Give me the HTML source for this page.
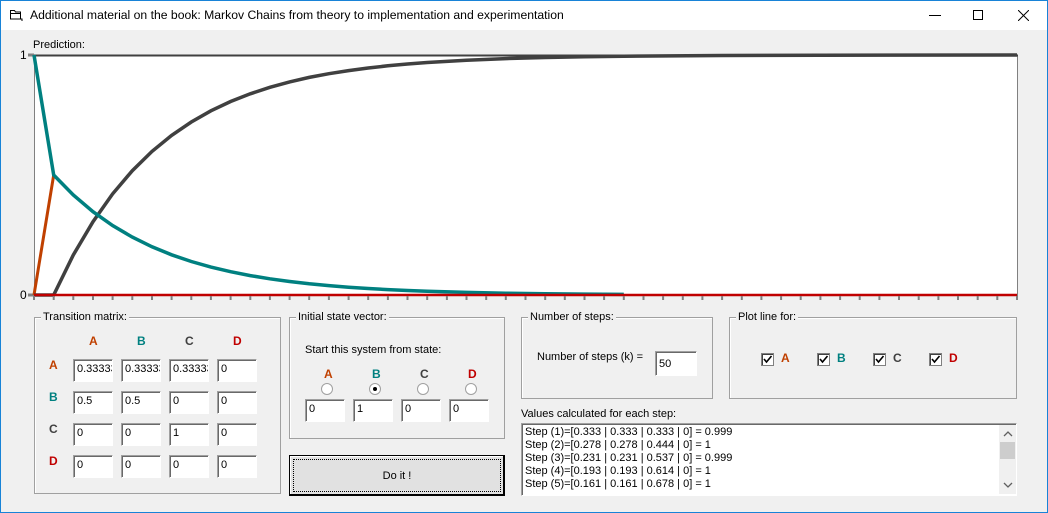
<!DOCTYPE html>
<html><head><style>
*{margin:0;padding:0;box-sizing:border-box}
body{width:1048px;height:513px;background:#f0f0f0;font-family:"Liberation Sans",sans-serif;font-size:11px;color:#000;position:relative;overflow:hidden}
.a{position:absolute}
.title{left:0;top:0;width:1048px;height:30px;background:#fff}
.gb{position:absolute;border:1px solid #a0a0a0;box-shadow:inset 1px 1px 0 #fff}
.gl{position:absolute;top:-7px;left:6px;background:#f0f0f0;padding:0 2px;white-space:nowrap}
.tb{position:absolute;width:40px;height:23px;background:#fff;border:1px solid;border-color:#a0a0a0 #fff #fff #a0a0a0;box-shadow:inset 1px 1px 0 #696969;padding:3px 0 0 3px;white-space:nowrap;overflow:hidden}
.h{position:absolute;font-weight:bold;font-size:12px}
.o{color:#c04000}.t{color:#008080}.g{color:#404040}.r{color:#c00000}
.rad{position:absolute;width:12px;height:12px;border-radius:50%;border:1px solid #a0a0a0;background:#fff}
.cb{position:absolute;width:13px;height:13px;border:1px solid #808080;background:#fff;box-shadow:inset 1px 1px 0 #404040}
</style></head><body>
<div class="a title"></div>
<div class="a" style="left:0;top:0;width:1048px;height:513px;border:1px solid #1883d7;z-index:5;pointer-events:none"></div>
<svg class="a" style="left:9px;top:9px" width="14" height="12" viewBox="0 0 14 12"><path d="M1.5 1.5h4l1 1.5h5v7h-10z M1.5 4.5h10" fill="none" stroke="#000"/><path d="M11 10h2v2" stroke="#000" fill="none"/></svg>
<div class="a" style="left:30px;top:8px;font-size:12.2px">Additional material on the book: Markov Chains from theory to implementation and experimentation</div>
<div class="a" style="left:929px;top:15px;width:12px;height:1px;background:#000"></div>
<div class="a" style="left:973px;top:10px;width:10px;height:10px;border:1px solid #000"></div>
<svg class="a" style="left:1018px;top:10px" width="11" height="11"><path d="M0 0L11 11M11 0L0 11" stroke="#000"/></svg>

<div class="a" style="left:33px;top:39px">Prediction:</div>
<div class="a" style="left:20px;top:48px;font-size:12px">1</div>
<div class="a" style="left:20px;top:288px;font-size:12px">0</div>
<svg class="a" style="left:0;top:0" width="1048" height="310">
<rect x="34.5" y="55.5" width="983" height="240" fill="#fff" stroke="#808080"/>
<line x1="34" y1="55.5" x2="1018" y2="55.5" stroke="#404040" stroke-width="2"/>
<line x1="28" y1="55" x2="34" y2="55" stroke="#808080" stroke-width="3"/>
<line x1="28" y1="295" x2="34" y2="295" stroke="#808080" stroke-width="3"/>
<path d="M34 295L53.7 175" stroke="#c04000" stroke-width="3" fill="none"/>
<path d="M34 295L53.7 295L73.3 255L93 221.7L112.6 193.9L132.3 170.7L152 151.4L171.6 135.4L191.3 122L210.9 110.8L230.6 101.5L250.3 93.8L269.9 87.3L289.6 81.9L309.2 77.4L328.9 73.7L348.6 70.6L368.2 68L387.9 65.8L407.5 64L427.2 62.5L466.5 60.2L505.8 58.6L545.2 57.5L584.5 56.7L623.8 56.2L722 55.5L820 55.2L1017 55" stroke="#404040" stroke-width="3.5" fill="none"/>
<path d="M34 55L53.7 175L73.3 195L93 211.7L112.6 225.5L132.3 237.1L152 246.8L171.6 254.8L191.3 261.5L210.9 267.1L230.6 271.7L250.3 275.6L269.9 278.8L289.6 281.5L309.2 283.8L328.9 285.6L348.6 287.2L368.2 288.5L387.9 289.6L407.5 290.5L427.2 291.2L466.5 292.4L505.8 293.2L545.2 293.8L584.5 294.1L623.8 294.4" stroke="#008080" stroke-width="3.5" fill="none"/>
<path d="M34 295H1017" stroke="#c00000" stroke-width="2.5" fill="none"/>
<path d="M34 296v4M53.7 296v4M73.3 296v4M93 296v4M112.6 296v4M132.3 296v4M152 296v4M171.6 296v4M191.3 296v4M210.9 296v4M230.6 296v4M250.3 296v4M269.9 296v4M289.6 296v4M309.2 296v4M328.9 296v4M348.6 296v4M368.2 296v4M387.9 296v4M407.5 296v4M427.2 296v4M446.9 296v4M466.5 296v4M486.2 296v4M505.8 296v4M525.5 296v4M545.2 296v4M564.8 296v4M584.5 296v4M604.1 296v4M623.8 296v4M643.5 296v4M663.1 296v4M682.8 296v4M702.4 296v4M722.1 296v4M741.8 296v4M761.4 296v4M781.1 296v4M800.7 296v4M820.4 296v4M840.1 296v4M859.7 296v4M879.4 296v4M899 296v4M918.7 296v4M938.4 296v4M958 296v4M977.7 296v4M997.3 296v4M1017 296v4" stroke="#808080" stroke-width="2"/>
</svg>

<div class="gb" style="left:34px;top:317px;width:247px;height:177px"><div class="gl">Transition matrix:</div></div>
<div class="h o" style="left:89px;top:334px">A</div><div class="h t" style="left:137px;top:334px">B</div><div class="h g" style="left:185px;top:334px">C</div><div class="h r" style="left:233px;top:334px">D</div>
<div class="h o" style="left:49px;top:358px">A</div><div class="h t" style="left:49px;top:390px">B</div><div class="h g" style="left:49px;top:422px">C</div><div class="h r" style="left:49px;top:454px">D</div>
<div class="tb" style="left:73px;top:359px">0.33333</div><div class="tb" style="left:121px;top:359px">0.33333</div><div class="tb" style="left:169px;top:359px">0.33333</div><div class="tb" style="left:217px;top:359px">0</div>
<div class="tb" style="left:73px;top:391px">0.5</div><div class="tb" style="left:121px;top:391px">0.5</div><div class="tb" style="left:169px;top:391px">0</div><div class="tb" style="left:217px;top:391px">0</div>
<div class="tb" style="left:73px;top:423px">0</div><div class="tb" style="left:121px;top:423px">0</div><div class="tb" style="left:169px;top:423px">1</div><div class="tb" style="left:217px;top:423px">0</div>
<div class="tb" style="left:73px;top:455px">0</div><div class="tb" style="left:121px;top:455px">0</div><div class="tb" style="left:169px;top:455px">0</div><div class="tb" style="left:217px;top:455px">0</div>

<div class="gb" style="left:289px;top:317px;width:216px;height:122px"><div class="gl">Initial state vector:</div></div>
<div class="a" style="left:305px;top:344px">Start this system from state:</div>
<div class="h o" style="left:324px;top:367px">A</div><div class="h t" style="left:372px;top:367px">B</div><div class="h g" style="left:420px;top:367px">C</div><div class="h r" style="left:468px;top:367px">D</div>
<div class="rad" style="left:321px;top:383px"></div><div class="rad" style="left:369px;top:383px"><div style="position:absolute;left:3px;top:3px;width:4px;height:4px;border-radius:50%;background:#000"></div></div><div class="rad" style="left:417px;top:383px"></div><div class="rad" style="left:465px;top:383px"></div>
<div class="tb" style="left:305px;top:399px">0</div><div class="tb" style="left:353px;top:399px">1</div><div class="tb" style="left:401px;top:399px">0</div><div class="tb" style="left:449px;top:399px">0</div>

<div class="a" style="left:289px;top:455px;width:216px;height:41px;border:1px solid #000;border-width:1px 2px 2px 1px;background:#e1e1e1;box-shadow:inset 1px 1px 0 #fff"><div style="position:absolute;left:3px;top:3px;right:2px;bottom:2px;border:1px dotted #000;text-align:center;line-height:32px">Do it !</div></div>

<div class="gb" style="left:521px;top:317px;width:192px;height:82px"><div class="gl">Number of steps:</div></div>
<div class="a" style="left:537px;top:351px">Number of steps (k) =</div>
<div class="tb" style="left:655px;top:351px;width:42px;height:25px;padding-top:6px">50</div>

<div class="gb" style="left:729px;top:317px;width:288px;height:82px"><div class="gl">Plot line for:</div></div>
<div class="cb" style="left:761px;top:353px"></div><div class="h o" style="left:781px;top:351px">A</div>
<div class="cb" style="left:817px;top:353px"></div><div class="h t" style="left:837px;top:351px">B</div>
<div class="cb" style="left:873px;top:353px"></div><div class="h g" style="left:893px;top:351px">C</div>
<div class="cb" style="left:929px;top:353px"></div><div class="h r" style="left:949px;top:351px">D</div>
<svg class="a" style="left:0;top:0" width="1048" height="513"><g fill="none" stroke="#000" stroke-width="1.6"><path d="M764 359l2.5 3 5-6"/><path d="M820 359l2.5 3 5-6"/><path d="M876 359l2.5 3 5-6"/><path d="M932 359l2.5 3 5-6"/></g></svg>

<div class="a" style="left:521px;top:408px">Values calculated for each step:</div>
<div class="a" style="left:521px;top:423px;width:496px;height:73px;background:#fff;border:1px solid;border-color:#a0a0a0 #fff #fff #a0a0a0;box-shadow:inset 1px 1px 0 #696969;padding:2px 0 0 3px;line-height:13px">Step (1)=[0.333 | 0.333 | 0.333 | 0] = 0.999<br>Step (2)=[0.278 | 0.278 | 0.444 | 0] = 1<br>Step (3)=[0.231 | 0.231 | 0.537 | 0] = 0.999<br>Step (4)=[0.193 | 0.193 | 0.614 | 0] = 1<br>Step (5)=[0.161 | 0.161 | 0.678 | 0] = 1</div>
<div class="a" style="left:999px;top:425px;width:17px;height:69px;background:#f0f0f0"></div>
<div class="a" style="left:1000px;top:442px;width:15px;height:17px;background:#cdcdcd"></div>
<svg class="a" style="left:1000px;top:427px" width="16" height="66"><path d="M4 9l4-4 4 4M4 56l4 4 4-4" fill="none" stroke="#606060" stroke-width="1.3"/></svg>
</body></html>
